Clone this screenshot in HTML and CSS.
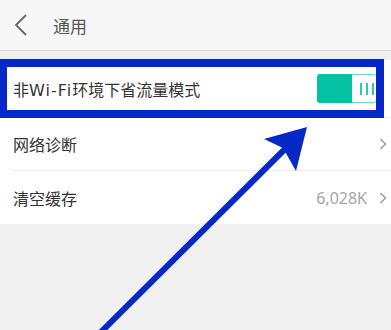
FILE: index.html
```html
<!DOCTYPE html>
<html lang="zh">
<head>
<meta charset="utf-8">
<link rel="stylesheet" href="styles.css">
</head>
<body>
<div class="page">
  <header class="topbar">
    <svg class="back" width="14" height="22" viewBox="0 0 14 22"><path d="M12 1 L2 11 L12 21" fill="none" stroke="#666" stroke-width="1.8"/></svg>
    <span class="title">通用</span>
  </header>
  <div class="gap"></div>
  <div class="list">
    <div class="row row-first">
      <span class="label">非<span class="latin">Wi-Fi</span>环境下省流量模式</span>
      <div class="toggle">
        <div class="toggle-on"></div>
        <div class="knob"><i></i><i></i><i></i></div>
      </div>
    </div>
    <div class="row">
      <span class="label">网络诊断</span>
      <svg class="chev" width="8" height="12" viewBox="0 0 8 12"><path d="M1.5 1 L6.5 6 L1.5 11" fill="none" stroke="#999" stroke-width="1.4"/></svg>
    </div>
    <div class="row">
      <span class="label">清空缓存</span>
      <span class="right"><span class="value">6,028K</span><svg class="chev" width="8" height="12" viewBox="0 0 8 12"><path d="M1.5 1 L6.5 6 L1.5 11" fill="none" stroke="#999" stroke-width="1.4"/></svg></span>
    </div>
  </div>
  <div class="highlight"></div>
  <svg class="arrow" width="391" height="330" viewBox="0 0 391 330">
    <line x1="100" y1="333" x2="288" y2="146" stroke="#0628c6" stroke-width="6"/>
    <polygon points="307,127 264,139 283,148 296,171" fill="#0628c6"/>
  </svg>
</div>
</body>
</html>
```
FILE: styles.css
```css
html, body {
  margin: 0;
  padding: 0;
}
body {
  background: #f0f0f0;
  font-family: "Noto Sans CJK SC", "Noto Sans", sans-serif;
}
.page {
  position: relative;
  width: 391px;
  height: 330px;
  overflow: hidden;
  background: #f0f0f0;
}
.topbar {
  height: 50px;
  background: #f7f7f7;
  border-bottom: 1px solid #dadada;
  display: flex;
  align-items: center;
}
.back {
  margin-left: 14px;
  margin-right: 25px;
}
.title {
  font-size: 17px;
  color: #555;
}
.gap {
  height: 9px;
  background: #efefef;
}
.list {
  background: #fff;
}
.row {
  height: 52px;
  margin-left: 12px;
  padding-right: 4px;
  display: flex;
  align-items: center;
  justify-content: space-between;
  border-bottom: 1px solid #ececec;
}
.row-first {
  height: 57px;
}
.row:last-child {
  border-bottom: none;
  height: 53px;
}
.label {
  font-size: 16px;
  color: #333;
  margin-left: 1px;
}
.latin {
  font-family: "DejaVu Sans", sans-serif;
  font-size: 16px;
  letter-spacing: 1px;
}
.toggle {
  display: flex;
  width: 60px;
  height: 29px;
  margin-right: 10px;
  border-radius: 3px;
  overflow: hidden;
}
.toggle-on {
  width: 35px;
  background: #05c1a3;
}
.knob {
  flex: 1;
  background: #fff;
  border: 1px solid #6ed9c6;
  border-left: none;
  border-radius: 0 3px 3px 0;
  display: flex;
  align-items: center;
  padding-left: 8px;
  gap: 4px;
}
.knob i {
  display: block;
  width: 2px;
  height: 12px;
  background: #2fcbb1;
}
.chev {
  display: block;
  margin-right: 0;
}
.right {
  display: flex;
  align-items: center;
  gap: 12px;
}
.value {
  font-size: 16px;
  color: #a6a6a6;
  font-family: "Noto Sans", sans-serif;
}
.highlight {
  position: absolute;
  left: 0;
  top: 59px;
  width: 384px;
  height: 59px;
  border: 8px solid #0628c6;
  border-left-width: 7px;
  box-sizing: border-box;
}
.arrow {
  position: absolute;
  left: 0;
  top: 0;
}
```
